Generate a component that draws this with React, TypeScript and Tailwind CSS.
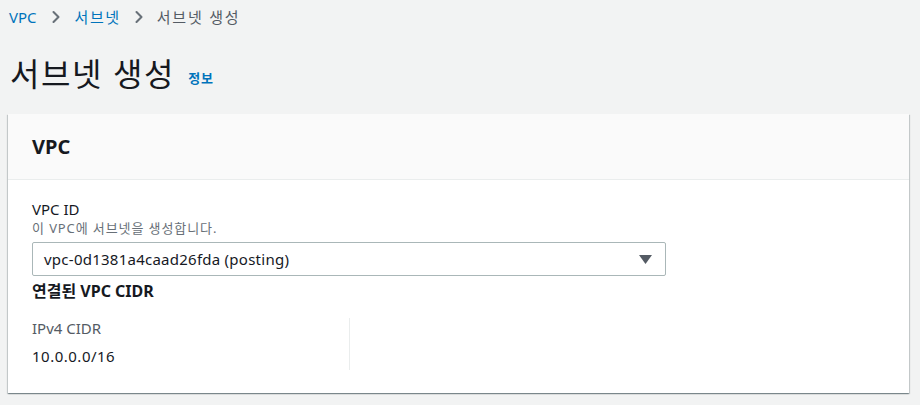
import { ChevronRight } from "lucide-react";

const font = { fontFamily: '"Noto Sans", "Noto Sans CJK KR", sans-serif' };

export default function App() {
  return (
    <div
      className="w-[920px] h-[405px] bg-[#f2f3f3] overflow-hidden text-[#16191f]"
      style={font}
    >
      {/* Breadcrumbs */}
      <nav className="flex items-center h-[34px] pl-[9px] text-[15px] leading-none">
        <span className="text-[#0073bb]">VPC</span>
        <ChevronRight className="w-[20px] h-[20px] mx-[9px] text-[#687078]" strokeWidth={2.5} />
        <span className="text-[#0073bb] tracking-[1.6px]">서브넷</span>
        <ChevronRight className="w-[20px] h-[20px] mx-[8px] text-[#687078]" strokeWidth={2.5} />
        <span className="text-[#545b64] tracking-[1.8px]">서브넷 생성</span>
      </nav>

      {/* Title */}
      <div className="flex items-end pl-[10px] h-[62px] pb-[6px]">
        <h1 className="text-[32px] leading-none font-normal tracking-[1.6px]">서브넷 생성</h1>
        <a className="ml-[13px] mb-[2px] text-[13px] font-bold text-[#0073bb] tracking-[1px]">정보</a>
      </div>

      {/* Card */}
      <div className="mt-[18px] ml-[8px] w-[901px] bg-white shadow-[0_1px_1px_0_rgba(0,28,36,0.3),1px_1px_1px_0_rgba(0,28,36,0.15),-1px_1px_1px_0_rgba(0,28,36,0.15)]">
        <div className="h-[66px] flex items-center px-[24px] bg-[#fafafa] border-b border-[#eaeded]">
          <h2 className="text-[20px] font-bold">VPC</h2>
        </div>
        <div className="px-[24px] pt-[19px] pb-[23px]">
          <div className="text-[15px] leading-[20px]">VPC ID</div>
          <div className="text-[13px] leading-[18px] text-[#687078] tracking-[0.9px]">이 VPC에 서브넷을 생성합니다.</div>
          <div className="mt-[5px] w-[634px] h-[34px] border border-[#aab7b8] rounded-[2px] flex items-center justify-between pl-[11px] pr-[13px]">
            <span className="text-[15px] tracking-[0.25px]">vpc-0d1381a4caad26fda (posting)</span>
            <svg width="13" height="9" viewBox="0 0 13 9">
              <path d="M0 0 H13 L6.5 9 Z" fill="#545b64" />
            </svg>
          </div>
          <div className="mt-[4px] text-[16px] font-bold leading-[22px]">연결된 VPC CIDR</div>
          <div className="mt-[16px] flex">
            <div className="w-[318px] h-[52px] border-r border-[#eaeded]">
              <div className="text-[15px] text-[#545b64] leading-[20px]">IPv4 CIDR</div>
              <div className="mt-[8px] text-[15px] leading-[20px] tracking-[0.5px]">10.0.0.0/16</div>
            </div>
          </div>
        </div>
      </div>
    </div>
  );
}
